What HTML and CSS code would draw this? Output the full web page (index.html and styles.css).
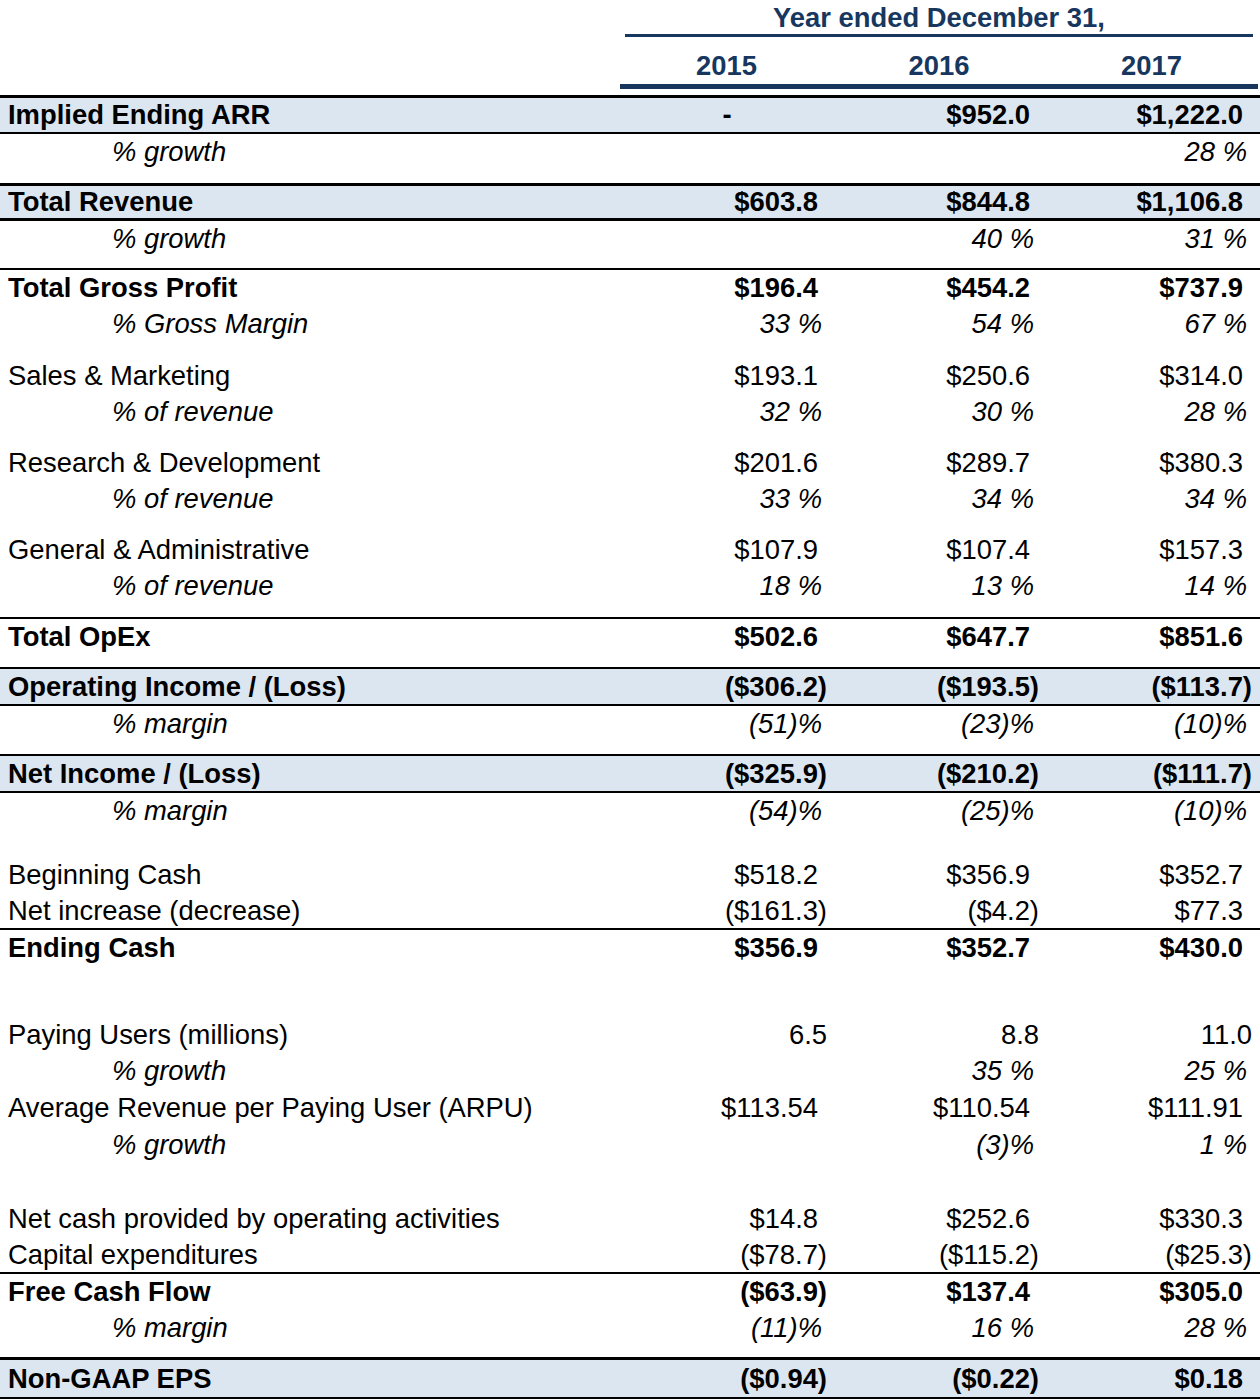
FILE: index.html
```
<!DOCTYPE html>
<html lang="en">
<head>
<meta charset="utf-8">
<title>Year ended December 31</title>
<link rel="stylesheet" href="styles.css">
</head>
<body>
<div class="sheet">
  <div class="head">
    <div class="head-title">Year ended December 31,</div>
    <div class="head-years"><span>2015</span><span>2016</span><span>2017</span></div>
  </div>

  <div class="row band b bt3 bb2 r34"><div class="lbl">Implied Ending ARR</div><div class="v dash">-</div><div class="v pos">$952.0</div><div class="v pos">$1,222.0</div></div>
  <div class="row"><div class="lbl sub">% growth</div><div class="v pct"></div><div class="v pct"></div><div class="v pct">28 %</div></div>
  <div class="sp13"></div>

  <div class="row band b bt3 bb3 r32"><div class="lbl">Total Revenue</div><div class="v pos">$603.8</div><div class="v pos">$844.8</div><div class="v pos">$1,106.8</div></div>
  <div class="row"><div class="lbl sub">% growth</div><div class="v pct"></div><div class="v pct">40 %</div><div class="v pct">31 %</div></div>
  <div class="sp11"></div>

  <div class="row b bt2"><div class="lbl">Total Gross Profit</div><div class="v pos">$196.4</div><div class="v pos">$454.2</div><div class="v pos">$737.9</div></div>
  <div class="row"><div class="lbl sub">% Gross Margin</div><div class="v pct">33 %</div><div class="v pct">54 %</div><div class="v pct">67 %</div></div>
  <div class="sp16"></div>

  <div class="row"><div class="lbl">Sales &amp; Marketing</div><div class="v pos">$193.1</div><div class="v pos">$250.6</div><div class="v pos">$314.0</div></div>
  <div class="row"><div class="lbl sub">% of revenue</div><div class="v pct">32 %</div><div class="v pct">30 %</div><div class="v pct">28 %</div></div>
  <div class="sp15"></div>

  <div class="row"><div class="lbl">Research &amp; Development</div><div class="v pos">$201.6</div><div class="v pos">$289.7</div><div class="v pos">$380.3</div></div>
  <div class="row"><div class="lbl sub">% of revenue</div><div class="v pct">33 %</div><div class="v pct">34 %</div><div class="v pct">34 %</div></div>
  <div class="sp15"></div>

  <div class="row"><div class="lbl">General &amp; Administrative</div><div class="v pos">$107.9</div><div class="v pos">$107.4</div><div class="v pos">$157.3</div></div>
  <div class="row"><div class="lbl sub">% of revenue</div><div class="v pct">18 %</div><div class="v pct">13 %</div><div class="v pct">14 %</div></div>
  <div class="sp13"></div>

  <div class="row b bt2"><div class="lbl">Total OpEx</div><div class="v pos">$502.6</div><div class="v pos">$647.7</div><div class="v pos">$851.6</div></div>
  <div class="sp12"></div>

  <div class="row band b bt2 bb2 r35"><div class="lbl">Operating Income / (Loss)</div><div class="v neg">($306.2)</div><div class="v neg">($193.5)</div><div class="v neg">($113.7)</div></div>
  <div class="row"><div class="lbl sub">% margin</div><div class="v pct">(51)%</div><div class="v pct">(23)%</div><div class="v pct">(10)%</div></div>
  <div class="sp12"></div>

  <div class="row band b bt2 bb2 r35"><div class="lbl">Net Income / (Loss)</div><div class="v neg">($325.9)</div><div class="v neg">($210.2)</div><div class="v neg">($111.7)</div></div>
  <div class="row"><div class="lbl sub">% margin</div><div class="v pct">(54)%</div><div class="v pct">(25)%</div><div class="v pct">(10)%</div></div>
  <div class="sp28"></div>

  <div class="row"><div class="lbl">Beginning Cash</div><div class="v pos">$518.2</div><div class="v pos">$356.9</div><div class="v pos">$352.7</div></div>
  <div class="row r35"><div class="lbl">Net increase (decrease)</div><div class="v neg">($161.3)</div><div class="v neg">($4.2)</div><div class="v pos">$77.3</div></div>
  <div class="row b bt2 r35"><div class="lbl">Ending Cash</div><div class="v pos">$356.9</div><div class="v pos">$352.7</div><div class="v pos">$430.0</div></div>
  <div class="sp52"></div>

  <div class="row"><div class="lbl">Paying Users (millions)</div><div class="v num">6.5</div><div class="v num">8.8</div><div class="v num">11.0</div></div>
  <div class="row"><div class="lbl sub">% growth</div><div class="v pct"></div><div class="v pct">35 %</div><div class="v pct">25 %</div></div>
  <div class="row r38"><div class="lbl">Average Revenue per Paying User (ARPU)</div><div class="v pos">$113.54</div><div class="v pos">$110.54</div><div class="v pos">$111.91</div></div>
  <div class="row"><div class="lbl sub">% growth</div><div class="v pct"></div><div class="v pct">(3)%</div><div class="v pct">1 %</div></div>
  <div class="sp38"></div>

  <div class="row"><div class="lbl">Net cash provided by operating activities</div><div class="v pos">$14.8</div><div class="v pos">$252.6</div><div class="v pos">$330.3</div></div>
  <div class="row r35"><div class="lbl">Capital expenditures</div><div class="v neg">($78.7)</div><div class="v neg">($115.2)</div><div class="v neg">($25.3)</div></div>
  <div class="row b bt2 r35"><div class="lbl">Free Cash Flow</div><div class="v neg">($63.9)</div><div class="v pos">$137.4</div><div class="v pos">$305.0</div></div>
  <div class="row r37"><div class="lbl sub">% margin</div><div class="v pct">(11)%</div><div class="v pct">16 %</div><div class="v pct">28 %</div></div>
  <div class="sp11"></div>

  <div class="row band b bt3 bb2 r37"><div class="lbl">Non-GAAP EPS</div><div class="v neg">($0.94)</div><div class="v neg">($0.22)</div><div class="v pos">$0.18</div></div>
</div>
</body>
</html>
```

FILE: styles.css
```
html, body {
  margin: 0;
  padding: 0;
  background: #ffffff;
}

body {
  font-family: "Liberation Sans", Arial, sans-serif;
  font-size: 27.4px;
  color: #000000;
}

.sheet {
  width: 1260px;
  overflow: hidden;
}

/* Header */
.head {
  color: #17375e;
  font-weight: bold;
  padding-bottom: 6px;
}

.head-title {
  margin-left: 625px;
  width: 628px;
  height: 32px;
  padding-top: 2px;
  line-height: 31px;
  text-align: center;
  border-bottom: 3px solid #17375e;
  white-space: nowrap;
}

.head-years {
  margin-left: 620px;
  width: 638px;
  height: 34px;
  padding-top: 13px;
  line-height: 31px;
  display: grid;
  grid-template-columns: 213px 212px 213px;
  text-align: center;
  border-bottom: 5px solid #17375e;
}

/* Rows */
.row {
  display: grid;
  grid-template-columns: 621px 212px 212px 213px;
  align-items: center;
  height: 36px;
  white-space: nowrap;
}

.r32 { height: 32px; }
.r34 { height: 34px; }
.r35 { height: 35px; }
.r37 { height: 37px; }
.r38 { height: 38px; }

.band { background: #dce6f1; }
.b { font-weight: bold; }

.bt2 { border-top: 2px solid #000; }
.bt3 { border-top: 3px solid #000; }
.bb2 { border-bottom: 2px solid #000; }
.bb3 { border-bottom: 3px solid #000; }

.sp11 { height: 11px; }
.sp12 { height: 12px; }
.sp13 { height: 13px; }
.sp15 { height: 15px; }
.sp16 { height: 16px; }
.sp28 { height: 28px; }
.sp38 { height: 38px; }
.sp52 { height: 52px; }

.lbl {
  padding-left: 8px;
}

.lbl.sub {
  padding-left: 112px;
  font-style: italic;
}

.v {
  text-align: right;
}

.pos { padding-right: 15px; }
.neg { padding-right: 6px; }
.num { padding-right: 6px; }
.pct {
  padding-right: 11px;
  font-style: italic;
}
.dash { text-align: center; }
```
